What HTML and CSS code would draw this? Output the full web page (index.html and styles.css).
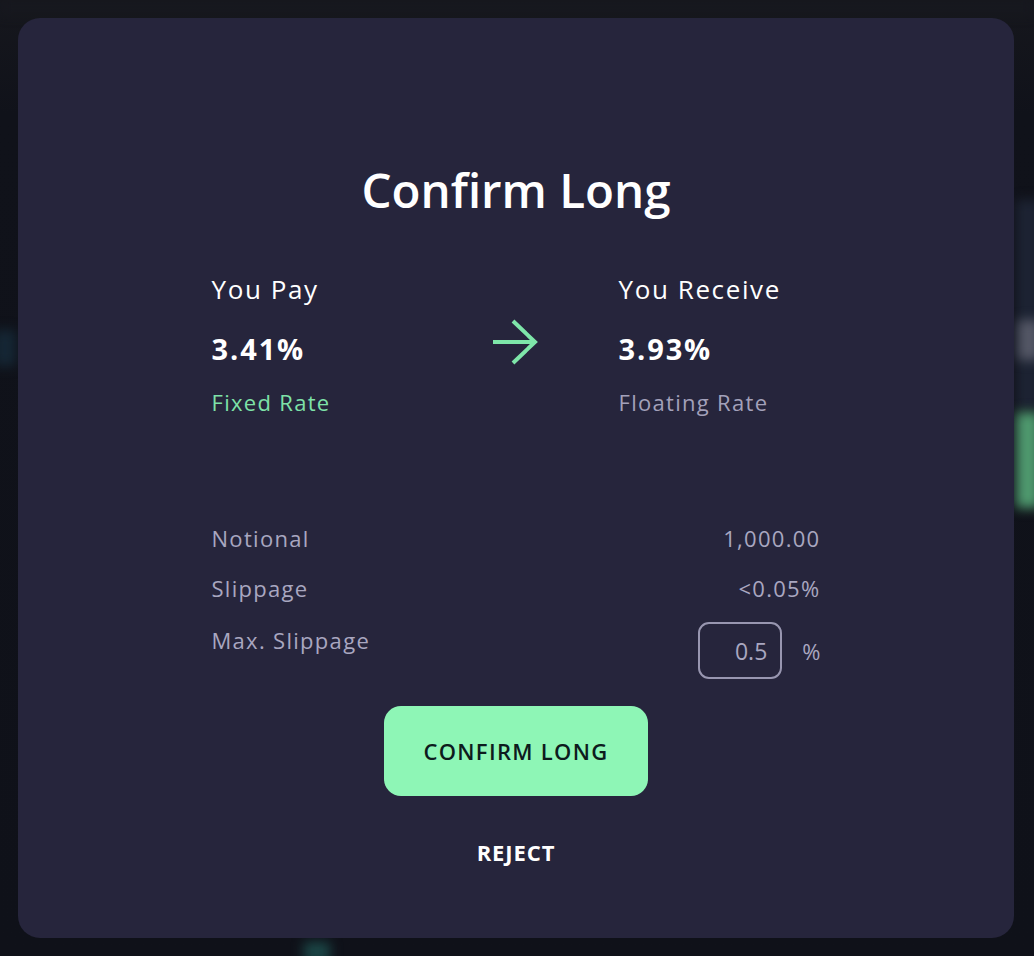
FILE: index.html
```html
<!DOCTYPE html>
<html lang="en">

<head>
    <meta charset="UTF-8">
    <meta name="viewport" content="width=device-width, initial-scale=1.0">
    <title>Confirm Long</title>
    <link rel="stylesheet" href="styles.css">
</head>

<body>
    <div class="backdrop">
        <span class="blob blob-top"></span>
        <span class="blob blob-left"></span>
        <span class="blob blob-right-dark"></span>
        <span class="blob blob-right-grey"></span>
        <span class="blob blob-right-green"></span>
        <span class="blob blob-bottom"></span>
    </div>

    <div class="modal">
        <h1 class="title">Confirm Long</h1>

        <div class="trade">
            <div class="side">
                <div class="side-label">You Pay</div>
                <div class="side-rate">3.41%</div>
                <div class="side-type fixed">Fixed Rate</div>
            </div>
            <div class="arrow">
                <svg width="48" height="48" viewBox="0 0 48 48" fill="none">
                    <path d="M2 24H44M22 3L44 24L22 45" stroke="#7ee6a9" stroke-width="4" />
                </svg>
            </div>
            <div class="side">
                <div class="side-label">You Receive</div>
                <div class="side-rate">3.93%</div>
                <div class="side-type">Floating Rate</div>
            </div>
        </div>

        <div class="details">
            <div class="row">
                <span>Notional</span>
                <span>1,000.00</span>
            </div>
            <div class="row">
                <span>Slippage</span>
                <span>&lt;0.05%</span>
            </div>
            <div class="row row-max">
                <span class="max-label">Max. Slippage</span>
                <div class="max-input">
                    <input type="text" value="0.5" class="slip-input">
                    <span class="pct">%</span>
                </div>
            </div>
        </div>

        <button class="btn-confirm">CONFIRM LONG</button>
        <button class="btn-reject">REJECT</button>
    </div>
</body>

</html>
```

FILE: styles.css
```css
html,
body {
    margin: 0;
    height: 100%;
}

body {
    font-family: "Open Sans", "Liberation Sans", sans-serif;
    background-color: #10121a;
    padding: 18px 20px 18px 18px;
    box-sizing: border-box;
    overflow: hidden;
}

.backdrop {
    position: fixed;
    inset: 0;
    background: linear-gradient(180deg, #16171d 0%, #10121a 12%, #0f1119 100%);
}

.blob {
    position: absolute;
    filter: blur(6px);
}

.blob-top {
    left: 0;
    top: 0;
    width: 1034px;
    height: 14px;
    background: #17181f;
}

.blob-left {
    left: -6px;
    top: 330px;
    width: 22px;
    height: 36px;
    background: #152735;
}

.blob-right-dark {
    right: -6px;
    top: 200px;
    width: 24px;
    height: 210px;
    background: #1d2333;
}

.blob-right-grey {
    right: -6px;
    top: 320px;
    width: 22px;
    height: 40px;
    background: #555866;
}

.blob-right-green {
    right: -6px;
    top: 412px;
    width: 24px;
    height: 96px;
    background: #4f9a6f;
}

.blob-bottom {
    left: 304px;
    bottom: -6px;
    width: 26px;
    height: 20px;
    background: #1b4646;
}

.modal {
    position: relative;
    width: 996px;
    height: 920px;
    box-sizing: border-box;
    background-color: #26253c;
    border-radius: 22px;
    padding-top: 143px;
    display: flex;
    flex-direction: column;
    align-items: center;
    color: #fff;
}

.title {
    margin: 0;
    font-size: 47.5px;
    line-height: 58px;
    font-weight: 600;
}

.trade {
    display: grid;
    grid-template-columns: 279px 128px 202px;
    width: 609px;
    margin-top: 53px;
}

.side-label {
    font-size: 26px;
    line-height: 34px;
    letter-spacing: 1.6px;
}

.side-rate {
    margin-top: 25px;
    font-size: 29px;
    line-height: 36px;
    font-weight: 700;
    letter-spacing: 1.9px;
}

.side-type {
    margin-top: 20px;
    font-size: 22px;
    line-height: 30px;
    letter-spacing: 1.3px;
    color: #a3a1ba;
}

.side-type.fixed {
    color: #7ee2a8;
}

.arrow {
    padding-top: 46px;
}

.arrow svg {
    display: block;
}

.details {
    width: 609px;
    margin-top: 106px;
    display: flex;
    flex-direction: column;
    gap: 20px;
    color: #a9a7c0;
    font-size: 22px;
    line-height: 30px;
    letter-spacing: 1.3px;
}

.row {
    display: flex;
    justify-content: space-between;
}

.row-max {
    margin-top: -1px;
    align-items: flex-start;
}

.max-label {
    margin-top: 3px;
}

.max-input {
    display: flex;
    align-items: center;
    gap: 20px;
}

.slip-input {
    width: 84px;
    height: 57px;
    box-sizing: border-box;
    border: 2px solid #9896b0;
    border-radius: 11px;
    background: transparent;
    color: #a9a7c0;
    font-family: inherit;
    font-size: 23px;
    text-align: right;
    padding: 0 13px 0 0;
    outline: none;
}

.pct {
    letter-spacing: 0;
}

.btn-confirm {
    margin-top: 27px;
    width: 264px;
    height: 90px;
    border: none;
    border-radius: 17px;
    background-color: #8ef6b6;
    color: #0d1b1d;
    font-family: inherit;
    font-size: 22px;
    font-weight: 600;
    letter-spacing: 1.3px;
    cursor: pointer;
}

.btn-reject {
    margin-top: 43px;
    border: none;
    background: none;
    color: #fff;
    font-family: inherit;
    font-size: 22px;
    line-height: 26px;
    font-weight: 700;
    letter-spacing: 0.9px;
    padding: 0;
    cursor: pointer;
}
```
